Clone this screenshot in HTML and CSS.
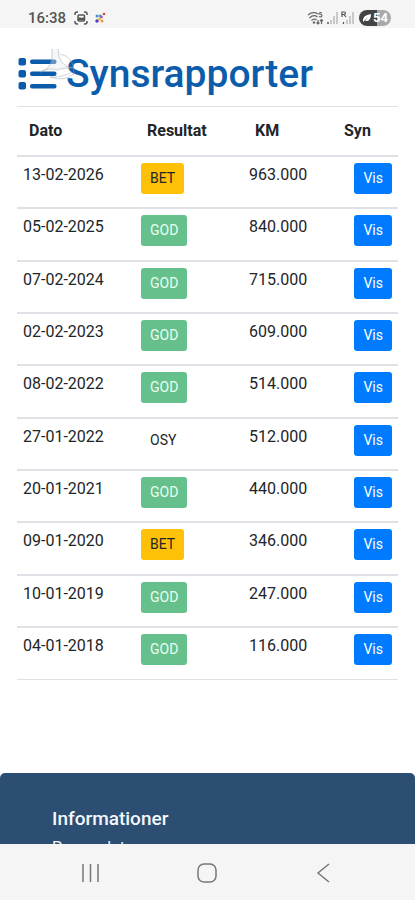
FILE: index.html
```html
<!DOCTYPE html>
<html lang="da">
<head>
<meta charset="utf-8">
<meta name="viewport" content="width=device-width, initial-scale=1">
<title>Synsrapporter</title>
<link rel="stylesheet" href="styles.css">
</head>
<body>
<header class="status">
  <div class="status-left">
    <span class="clock">16:38</span>
    <svg width="14" height="14" viewBox="0 0 14 14" fill="none" stroke="#555" stroke-width="1.5" aria-hidden="true"><path d="M1 4V3a2 2 0 0 1 2-2h1M10 1h1a2 2 0 0 1 2 2v1M13 10v1a2 2 0 0 1-2 2h-1M4 13H3a2 2 0 0 1-2-2v-1"/><rect x="4" y="4" width="6.500" height="6" rx="1"/><path d="M4 9l2-2 1.500 1L9 7l1 2" fill="#555"/></svg>
    <svg width="12" height="12" viewBox="0 0 12 12" aria-hidden="true"><circle cx="3" cy="4" r="1.500" fill="#4b8fe0"/><circle cx="6" cy="4" r="1.400" fill="#35b58a"/><circle cx="10" cy="2" r="1.300" fill="#d94343"/><circle cx="7.500" cy="5" r="1.400" fill="#9b59d0"/><circle cx="3" cy="9" r="1.700" fill="#493cc4"/><circle cx="5.500" cy="7" r="1.500" fill="#e7b938"/><circle cx="8" cy="9" r="1.500" fill="#e99b36"/></svg>
  </div>
  <div class="status-right">
    <svg width="48" height="14" viewBox="0 0 48 14" fill="none" aria-hidden="true"><g stroke="#666" stroke-width="1.200"><path d="M1 4q5-4 10-1M2.500 7q4-4 8-1M4.500 9.500q2.500-2.500 5-.5"/><path d="M15 2q-3-1-3 1 3 0 3 2-1 1.500-3 .5M11 9v4m-1.500-1.500L11 13l1.500-1.500M14.500 13V8.500M13 10l1.500-1.500L16 10"/></g><circle cx="7" cy="11.500" r="1.200" fill="#666"/><path d="M21 13v-2" stroke="#555" stroke-width="1.500"/><path d="M24 13V9M27 13V5M30 13V1M40 13V9M43 13V5M46 13V1" stroke="#bbb" stroke-width="1.500"/><path d="M36.500 13v-2M35 6V1h2q1.500 0 1.500 1.200T37 3.500h-2m2 0l2 2.500" stroke="#555" stroke-width="1.200"/></svg>
    <span class="battery"><svg width="10" height="10" viewBox="0 0 10 10" aria-hidden="true"><path d="M1 9Q0 2 9 1 9 9 3 8l3-4-5 5z" fill="#fff"/></svg>54</span>
  </div>
</header>
<main class="report">
  <h1 class="title">
    <svg class="title-icon" width="46" height="48" viewBox="0 0 46 48" aria-hidden="true"><g fill="#0b5cab"><rect x="1.500" y="8" width="7.500" height="7.500" rx="2"/><rect x="1.500" y="20" width="7.500" height="7.500" rx="2"/><rect x="1.500" y="32" width="7.500" height="7.500" rx="2"/><rect x="13" y="9.500" width="26.500" height="4.500" rx="2"/><rect x="13" y="21.500" width="26.500" height="4.500" rx="2"/><rect x="13" y="34" width="26.500" height="4.500" rx="2"/></g></svg>
    Synsrapporter
    <svg class="spinner" width="36" height="34" viewBox="0 0 36 34" fill="#e4e8ec" fill-opacity=".4" stroke="#9aa6b0" stroke-opacity=".5" aria-hidden="true"><path d="M12 1q2 20-12 23 10-5 17-2 8-3 16-2Q18 18 18 1"/><path d="M20 6q15 3 14 20-10 8-24 3 12 1 22-5" fill="none"/></svg>
  </h1>
  <table class="inspections">
    <colgroup><col class="c-date"><col class="c-result"><col class="c-km"><col class="c-view"></colgroup>
    <thead><tr><th scope="col">Dato</th><th scope="col">Resultat</th><th scope="col">KM</th><th scope="col">Syn</th></tr></thead>
    <tbody>
      <tr><td>13-02-2026</td><td><span class="btn bet">BET</span></td><td>963.000</td><td><button class="btn view">Vis</button></td></tr>
      <tr><td>05-02-2025</td><td><span class="btn god">GOD</span></td><td>840.000</td><td><button class="btn view">Vis</button></td></tr>
      <tr><td>07-02-2024</td><td><span class="btn god">GOD</span></td><td>715.000</td><td><button class="btn view">Vis</button></td></tr>
      <tr><td>02-02-2023</td><td><span class="btn god">GOD</span></td><td>609.000</td><td><button class="btn view">Vis</button></td></tr>
      <tr><td>08-02-2022</td><td><span class="btn god">GOD</span></td><td>514.000</td><td><button class="btn view">Vis</button></td></tr>
      <tr><td>27-01-2022</td><td><span class="btn">OSY</span></td><td>512.000</td><td><button class="btn view">Vis</button></td></tr>
      <tr><td>20-01-2021</td><td><span class="btn god">GOD</span></td><td>440.000</td><td><button class="btn view">Vis</button></td></tr>
      <tr><td>09-01-2020</td><td><span class="btn bet">BET</span></td><td>346.000</td><td><button class="btn view">Vis</button></td></tr>
      <tr><td>10-01-2019</td><td><span class="btn god">GOD</span></td><td>247.000</td><td><button class="btn view">Vis</button></td></tr>
      <tr><td>04-01-2018</td><td><span class="btn god">GOD</span></td><td>116.000</td><td><button class="btn view">Vis</button></td></tr>
    </tbody>
  </table>
</main>
<footer class="info">
  <h2>Informationer</h2>
  <a href="#">Persondata</a>
</footer>
<nav class="system" aria-label="System">
  <button aria-label="Seneste"><svg width="20" height="20" viewBox="0 0 20 20"><path d="M2 1v18M9.500 1v18M17 1v18"/></svg></button>
  <button aria-label="Hjem"><svg width="20" height="20" viewBox="0 0 20 20"><rect x="1" y="1" width="18" height="18" rx="6"/></svg></button>
  <button aria-label="Tilbage"><svg width="20" height="20" viewBox="0 0 20 20"><path d="M15 1L4 10l11 9"/></svg></button>
</nav>
</body>
</html>
```
FILE: styles.css
```css
* { box-sizing: border-box; }
body {
  margin: 0;
  height: 100vh;
  display: flex;
  flex-direction: column;
  background: #fff;
  color: #212529;
  font: 16px/24px Roboto, sans-serif;
}
.status {
  flex: none;
  display: flex;
  justify-content: space-between;
  padding: 9px 24px 1px 28px;
  background: #f5f5f5;
}
.status-left, .status-right { display: flex; align-items: center; gap: 6px; height: 18px; }
.status-right { gap: 4px; }
.clock { font: 500 15px/18px Roboto, sans-serif; color: #555; margin-right: 2px; }
.battery {
  display: flex;
  align-items: center;
  gap: 1px;
  height: 16px;
  padding: 0 3px;
  border-radius: 8px;
  background: linear-gradient(90deg, #444 55%, #aaa 55%);
  color: #fff;
  font: 700 13px/16px Roboto, sans-serif;
}
.report {
  flex: 1;
  display: flex;
  flex-direction: column;
  padding: 18px 17px 93px;
}
.title {
  position: relative;
  display: flex;
  align-items: center;
  gap: 3px;
  margin: 0 0 4px;
  height: 56px;
  color: #0b5cab;
  font: 500 39px/56px Roboto, sans-serif;
}
.spinner { position: absolute; left: 23px; top: 2px; }
.inspections {
  flex: 1;
  width: 100%;
  table-layout: fixed;
  border-collapse: collapse;
  border-bottom: 1px solid #dee2e6;
}
.c-date { width: 118px; }
.c-result { width: 108px; }
.c-km { width: 89px; }
.c-view { width: 66px; }
th { padding: 12px; height: 49px; border-top: 1px solid #dee2e6; text-align: left; font-weight: 700; }
td { padding: 6px; height: 52px; border-top: 2px solid #dee2e6; vertical-align: top; }
td:last-child { text-align: right; }
.btn {
  display: inline-block;
  padding: 4px 8px;
  border: 1px solid transparent;
  border-radius: 3px;
  background: transparent;
  color: #212529;
  font: 14px/21px Roboto, sans-serif;
  vertical-align: top;
}
.bet { background: #ffc107; }
.god { background: #66c08c; color: #e8fff1; }
.view { background: #007bff; color: #fff; }
.info {
  flex: none;
  height: 71px;
  overflow: hidden;
  padding: 34px 52px 0;
  border-radius: 5px 5px 0 0;
  background: #2c4e73;
  color: #f3f8fc;
}
.info h2 { margin: 0 0 7px; font: 500 19px/24px Roboto, sans-serif; }
.info a { display: block; color: inherit; text-decoration: none; font-size: 16px; line-height: 20px; }
.system {
  flex: none;
  display: flex;
  justify-content: space-around;
  padding: 18px 33px 17px;
  background: #f5f5f5;
}
.system button { padding: 0; border: 0; background: none; height: 21px; }
.system svg { display: block; fill: none; stroke: #777; stroke-width: 1.500; }
```
